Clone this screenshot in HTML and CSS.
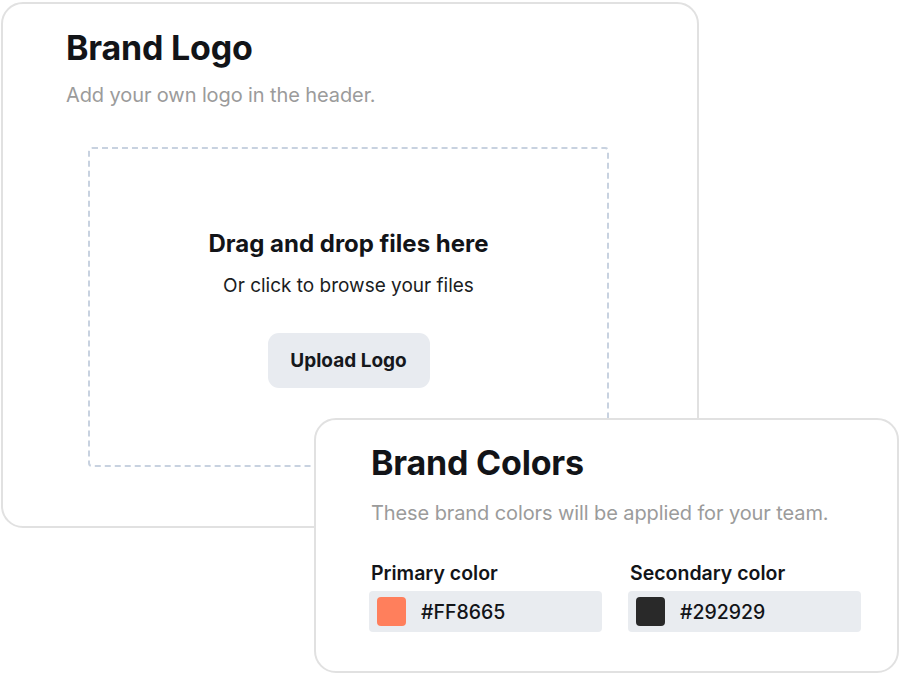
FILE: index.html
```html
<!DOCTYPE html>
<html lang="en">
<head>
    <meta charset="UTF-8">
    <meta name="viewport" content="width=device-width, initial-scale=1.0">
    <title>Brand Settings</title>
    <link rel="stylesheet" href="styles.css">
</head>
<body>
    <div class="canvas">
        <!-- Logo upload card -->
        <section class="card logo-card">
            <h1>Brand Logo</h1>
            <p class="subtitle">Add your own logo in the header.</p>

            <div class="dropzone">
                <h3>Drag and drop files here</h3>
                <p class="browse">Or click to browse your files</p>
                <button type="button" class="upload-btn">Upload Logo</button>
            </div>
        </section>

        <!-- Colors card, sits over the logo card -->
        <section class="card colors-card">
            <h2>Brand Colors</h2>
            <p class="subtitle">These brand colors will be applied for your team.</p>

            <div class="color-fields">
                <div class="color-field">
                    <label>Primary color</label>
                    <div class="color-input">
                        <span class="swatch swatch-primary"></span>
                        <span class="hex">#FF8665</span>
                    </div>
                </div>
                <div class="color-field">
                    <label>Secondary color</label>
                    <div class="color-input">
                        <span class="swatch swatch-secondary"></span>
                        <span class="hex">#292929</span>
                    </div>
                </div>
            </div>
        </section>
    </div>
</body>
</html>
```

FILE: styles.css
```css
body {
    margin: 0;
    font-family: 'Inter', 'Liberation Sans', sans-serif;
    background: #fff;
    color: #121418;
}

.canvas {
    position: relative;
    width: 900px;
    height: 675px;
    padding: 2px 0 0 1px;
    box-sizing: border-box;
}

.card {
    background: #fff;
    border: 2px solid #e1e1e1;
    border-radius: 22px;
    box-sizing: border-box;
}

.logo-card {
    width: 698px;
    height: 526px;
    padding: 23px 0 0 63px;
}

h1 {
    margin: 0;
    font-size: 34px;
    line-height: 41px;
    font-weight: 700;
    letter-spacing: -0.2px;
}

.subtitle {
    margin: 15px 0 0;
    font-size: 20px;
    line-height: 24px;
    letter-spacing: -0.1px;
    color: #9b9b9b;
}

.dropzone {
    width: 521px;
    height: 320px;
    margin: 40px 0 0 22px;
    padding-top: 80px;
    border: 2px dashed #c8d2e0;
    border-radius: 4px;
    box-sizing: border-box;
    text-align: center;
}

.dropzone h3 {
    margin: 0;
    font-size: 24px;
    line-height: 30px;
    font-weight: 700;
}

.browse {
    margin: 15px 0 0;
    font-size: 19px;
    line-height: 24px;
    color: #1b1d22;
}

.upload-btn {
    margin-top: 35px;
    width: 162px;
    height: 55px;
    border: none;
    border-radius: 11px;
    background: #e8ebf0;
    font-family: inherit;
    font-size: 19px;
    font-weight: 700;
    color: #16181c;
    cursor: pointer;
}

.colors-card {
    position: absolute;
    left: 314px;
    top: 418px;
    width: 585px;
    height: 255px;
    padding: 22px 0 0 55px;
}

h2 {
    margin: 0;
    font-size: 34px;
    line-height: 41px;
    font-weight: 700;
    letter-spacing: -0.2px;
}

.colors-card .subtitle {
    margin-top: 18px;
}

.color-fields {
    display: grid;
    grid-template-columns: 233px 233px;
    gap: 26px;
    margin-top: 36px;
    margin-left: -2px;
}

.color-field label {
    display: block;
    padding-left: 2px;
    font-size: 19.5px;
    line-height: 24px;
    font-weight: 600;
}

.color-input {
    display: flex;
    align-items: center;
    gap: 15px;
    height: 41px;
    margin-top: 6px;
    padding-left: 8px;
    background: #e9ecf0;
    border-radius: 4px;
}

.swatch {
    width: 29px;
    height: 29px;
    border-radius: 4px;
}

.swatch-primary {
    background: #ff7f5c;
}

.swatch-secondary {
    background: #292929;
}

.hex {
    font-size: 19.5px;
    font-weight: 500;
}
```
